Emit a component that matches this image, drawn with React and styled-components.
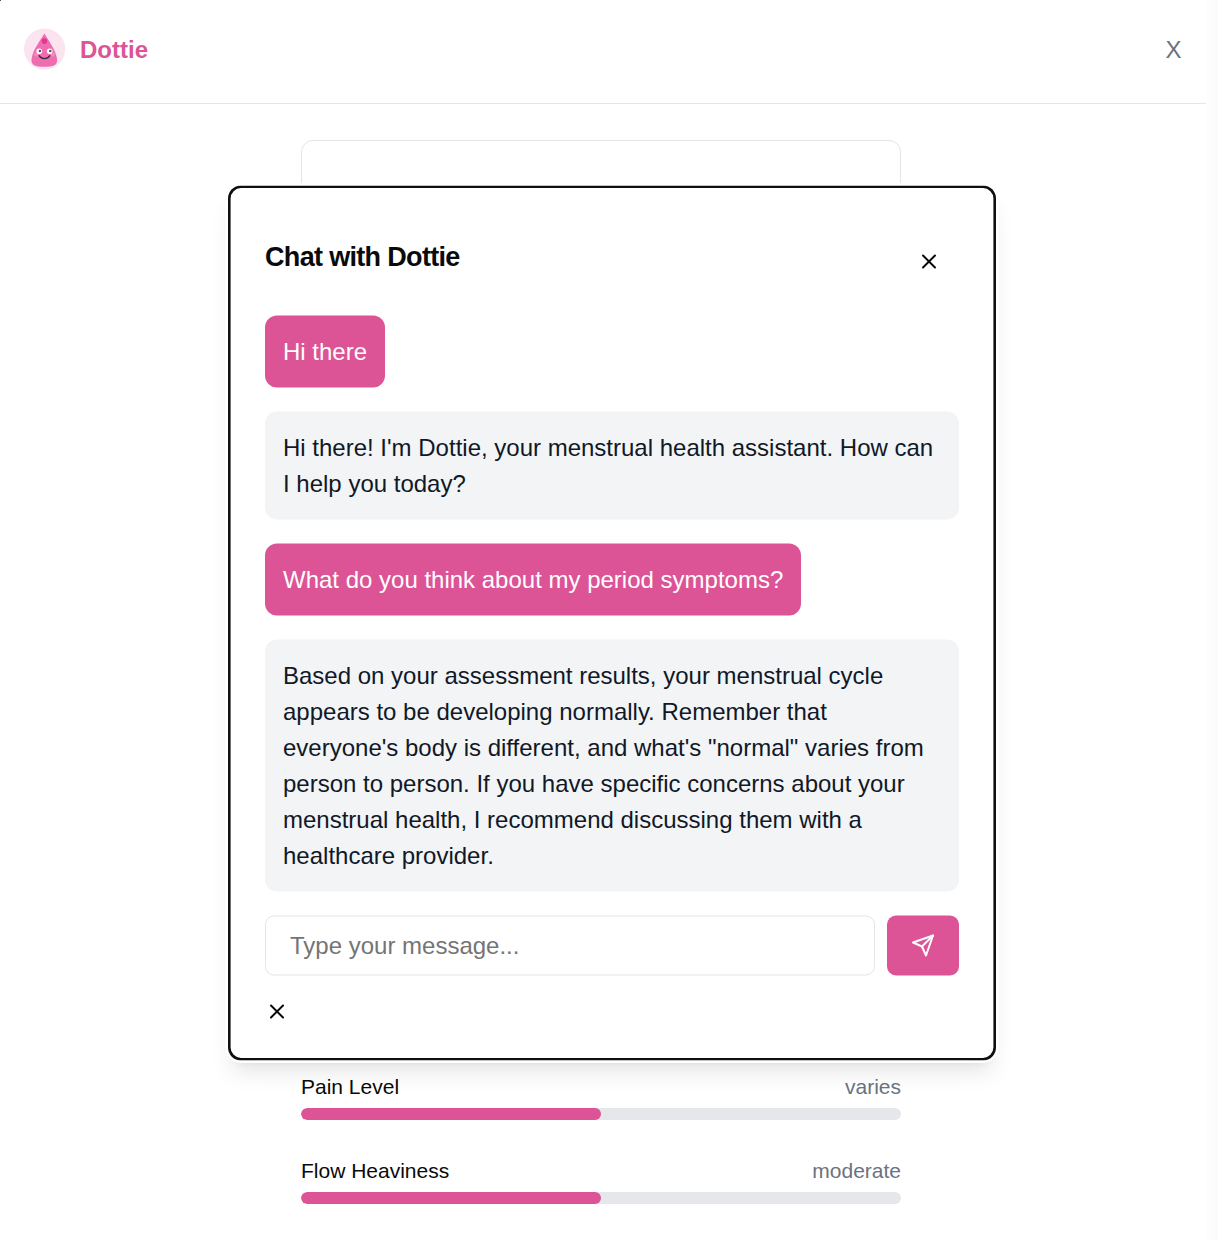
import React from "react";
import styled, { createGlobalStyle } from "styled-components";

const PINK = "#dc5396";

const GlobalStyle = createGlobalStyle`
  *, *::before, *::after { box-sizing: border-box; }
  html, body { margin: 0; background: #fff; }
  body {
    height: 1240px;
    overflow: hidden;
    font-family: "Liberation Sans", Arial, sans-serif;
    font-size: 24px;
    line-height: 36px;
    color: #0a0a0a;
  }
  button, input { font: inherit; margin: 0; }
`;

const Screen = styled.div`
  position: relative;
  display: flex;
  width: 1218px;
  height: 1240px;
  background: #fff;
  overflow: hidden;
`;

const Page = styled.div`
  width: 1206px;
  flex: none;
  display: flex;
  flex-direction: column;
`;

const EdgeShade = styled.div`
  flex: 1;
  background: linear-gradient(to right, #fefefe, #fafafa);
`;

const CornerMark = styled.div`
  position: absolute;
  top: 0;
  left: 0;
  width: 1px;
  height: 1px;
  background: #555;
`;

const Header = styled.header`
  display: flex;
  align-items: center;
  justify-content: space-between;
  height: 104px;
  padding: 0 24.5px 3px 24px;
  border-bottom: 1px solid #e5e5e5;
`;

const Brand = styled.div`
  display: flex;
  align-items: center;
  gap: 14px;
  color: ${PINK};
  font-weight: 700;
`;

const Logo = styled.svg`
  width: 42px;
  height: 42px;
  margin-bottom: 2px;
`;

const PageClose = styled.button`
  border: 0;
  padding: 0;
  background: none;
  color: #6b7280;
`;

const Main = styled.main`
  display: flex;
  flex-direction: column;
  width: 600px;
  margin: 36px 0 0 301px;
`;

const ResultCard = styled.section`
  height: 896px;
  margin-bottom: 36px;
  border: 1px solid #e5e5e5;
  border-radius: 12px;
`;

const Metric = styled.div`
  display: flex;
  flex-direction: column;
  gap: 6px;
  margin-bottom: 36px;
`;

const MetricLabels = styled.div`
  display: flex;
  justify-content: space-between;
  font-size: 21px;
  line-height: 30px;
`;

const MetricValue = styled.span`
  color: #6b7280;
`;

const Track = styled.div`
  height: 12px;
  border-radius: 6px;
  background: #e5e7eb;
  overflow: hidden;
`;

const Fill = styled.div`
  height: 100%;
  border-radius: 6px;
  background: ${PINK};
`;

const Dialog = styled.div`
  position: absolute;
  left: 228px;
  top: 186px;
  transform: translateY(-0.5px);
  width: 768px;
  height: 875px;
  display: flex;
  flex-direction: column;
  padding: 34px 37px;
  border-radius: 13px;
  background: #fff;
  box-shadow: inset 0 0 0 2.6px #0f0f11, 0 0 0 2.5px #fff,
    0 15px 22px -4px rgba(0, 0, 0, 0.1), 0 6px 9px -6px rgba(0, 0, 0, 0.1);
`;

const DialogHeader = styled.div`
  display: flex;
  align-items: flex-start;
  justify-content: space-between;
  height: 96px;
  padding: 19px 18px 0 0;
`;

const DialogTitle = styled.h2`
  margin: 0;
  font-size: 27px;
  line-height: 36px;
  font-weight: 700;
  letter-spacing: -0.675px;
`;

const IconButton = styled.button`
  display: flex;
  width: 24px;
  height: 24px;
  padding: 0;
  border: 0;
  background: none;
  color: #0a0a0a;
  margin-top: ${(p) => p.$top}px;
`;

const Messages = styled.div`
  display: flex;
  flex-direction: column;
  align-items: flex-start;
  gap: 24px;
  margin-bottom: 24px;
`;

const Bubble = styled.div`
  padding: 18px;
  border-radius: 12px;
  background: ${(p) => (p.$user ? PINK : "#f3f4f6")};
  color: ${(p) => (p.$user ? "#fff" : "#111827")};
`;

const Composer = styled.form`
  display: flex;
  gap: 12px;
`;

const MessageInput = styled.input`
  flex: 1;
  min-width: 0;
  height: 60px;
  padding: 0 24px;
  border: 1px solid #e5e5e5;
  border-radius: 9px;
  background: #fff;
  outline: none;
  &::placeholder { color: #757575; opacity: 1; }
`;

const SendButton = styled.button`
  display: flex;
  align-items: center;
  justify-content: center;
  width: 72px;
  height: 60px;
  padding: 0;
  border: 0;
  border-radius: 9px;
  background: ${PINK};
  color: #fff;
`;

function Mascot() {
  return (
    <Logo viewBox="0 0 42 42">
      <circle cx="20.6" cy="21" r="20.6" fill="#fbe4f0" />
      <path
        d="M20.4 5.5C24 12 31.5 21 33 30.5C34 37.5 29.5 38.7 20.4 38.7C11.3 38.7 6.6 37.5 7.6 30.5C9 21 16.8 12 20.4 5.5Z"
        fill="#ed6fb2"
      />
      <circle cx="20.4" cy="13.1" r="2.8" fill="#e8368f" />
      <circle cx="12.2" cy="26.6" r="2.1" fill="#f48cb4" />
      <circle cx="28.7" cy="26.6" r="2.1" fill="#f48cb4" />
      <circle cx="15.3" cy="23.2" r="2.8" fill="#fff" />
      <circle cx="25.7" cy="23.2" r="2.8" fill="#fff" />
      <circle cx="15.9" cy="23" r="1.3" fill="#555" />
      <circle cx="26.3" cy="23" r="1.3" fill="#555" />
      <path
        d="M15.1 27.7C17.5 31.7 23.4 31.7 25.9 27.7"
        fill="none"
        stroke="#3a3038"
        strokeWidth="1.3"
        strokeLinecap="round"
      />
    </Logo>
  );
}

const strokeProps = {
  width: 24,
  height: 24,
  viewBox: "0 0 24 24",
  fill: "none",
  stroke: "currentColor",
  strokeWidth: 2,
  strokeLinecap: "round",
  strokeLinejoin: "round",
};

const CloseIcon = () => (
  <svg {...strokeProps}>
    <path d="M18 6 6 18" />
    <path d="m6 6 12 12" />
  </svg>
);

const SendIcon = () => (
  <svg {...strokeProps}>
    <path d="m22 2-7 20-4-9-9-4Z" />
    <path d="M22 2 11 13" />
  </svg>
);

const metrics = [
  { label: "Pain Level", value: "varies", percent: 50 },
  { label: "Flow Heaviness", value: "moderate", percent: 50 },
];

const messages = [
  { user: true, text: "Hi there" },
  {
    user: false,
    text: "Hi there! I'm Dottie, your menstrual health assistant. How can I help you today?",
  },
  { user: true, text: "What do you think about my period symptoms?" },
  {
    user: false,
    text: "Based on your assessment results, your menstrual cycle appears to be developing normally. Remember that everyone's body is different, and what's \"normal\" varies from person to person. If you have specific concerns about your menstrual health, I recommend discussing them with a healthcare provider.",
  },
];

export default function App() {
  return (
    <Screen>
      <GlobalStyle />
      <Page>
        <Header>
          <Brand>
            <Mascot />
            <span>Dottie</span>
          </Brand>
          <PageClose>X</PageClose>
        </Header>
        <Main>
          <ResultCard />
          {metrics.map((m) => (
            <Metric key={m.label}>
              <MetricLabels>
                <span>{m.label}</span>
                <MetricValue>{m.value}</MetricValue>
              </MetricLabels>
              <Track>
                <Fill style={{ width: `${m.percent}%` }} />
              </Track>
            </Metric>
          ))}
        </Main>
      </Page>
      <EdgeShade />
      <CornerMark />
      <Dialog role="dialog">
        <DialogHeader>
          <DialogTitle>Chat with Dottie</DialogTitle>
          <IconButton $top={11} aria-label="Close">
            <CloseIcon />
          </IconButton>
        </DialogHeader>
        <Messages>
          {messages.map((m) => (
            <Bubble key={m.text} $user={m.user}>
              {m.text}
            </Bubble>
          ))}
        </Messages>
        <Composer>
          <MessageInput placeholder="Type your message..." />
          <SendButton type="button" aria-label="Send">
            <SendIcon />
          </SendButton>
        </Composer>
        <IconButton $top={24} aria-label="Dismiss">
          <CloseIcon />
        </IconButton>
      </Dialog>
    </Screen>
  );
}
